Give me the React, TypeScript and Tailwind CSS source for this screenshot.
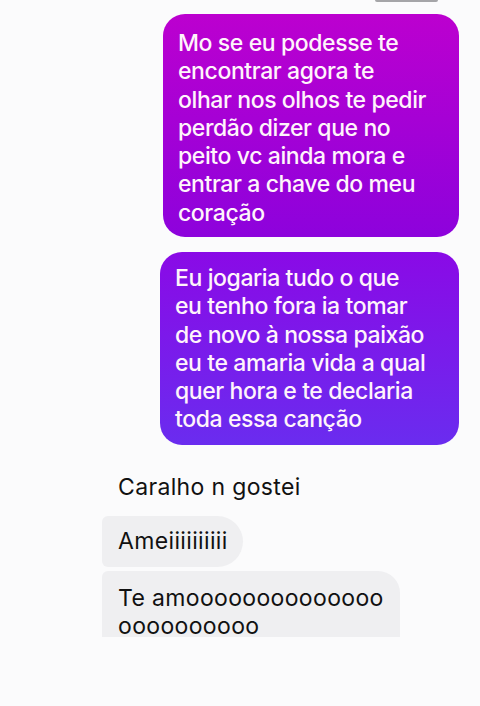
const sent1 = [
  'Mo se eu podesse te',
  'encontrar agora te',
  'olhar nos olhos te pedir',
  'perdão dizer que no',
  'peito vc ainda mora e',
  'entrar a chave do meu',
  'coração',
];

const sent2 = [
  'Eu jogaria tudo o que',
  'eu tenho fora ia tomar',
  'de novo à nossa paixão',
  'eu te amaria vida a qual',
  'quer hora e te declaria',
  'toda essa canção',
];

const Lines = ({ lines }: { lines: string[] }) => (
  <>
    {lines.map((l, i) => (
      <div key={i} className="whitespace-nowrap">{l}</div>
    ))}
  </>
);

export default function App() {
  return (
    <div
      className="w-[480px] h-[706px] overflow-hidden bg-[#fbfbfc] flex flex-col"
      style={{ fontFamily: 'Inter, "Noto Sans", sans-serif' }}
    >
      <div className="flex justify-end pr-[42px]">
        <div className="w-[63px] h-[2px] bg-[#a5a5a8] rounded-b" />
      </div>

      <div className="flex flex-col items-end pr-[21px] pt-[12px] gap-[15px]">
        <div className="w-[296px] h-[223px] rounded-[22px] bg-[linear-gradient(180deg,#bc00cf_0%,#8d02dc_100%)] pl-[15px] pt-[15px] text-[23px] font-medium leading-[28.3px] text-[#fff4fb] tracking-[-0.4px]">
          <Lines lines={sent1} />
        </div>
        <div className="w-[299px] h-[193px] rounded-[22px] bg-[linear-gradient(180deg,#8a0ae6_0%,#6a2cef_100%)] pl-[15px] pt-[12px] text-[23px] font-medium leading-[28.3px] text-[#fff4fb] tracking-[-0.4px]">
          <Lines lines={sent2} />
        </div>
      </div>

      <div className="flex flex-col items-start pl-[102px] pt-[28px] text-[23px] text-[#111] tracking-[0.35px]">
        <div className="pl-[16px] leading-[28px]">Caralho n gostei</div>
        <div className="mt-[15px] h-[51px] flex items-center pl-[16px] pr-[15px] bg-[#efeff1] rounded-l-[6px] rounded-r-[26px]">
          {'Ame' + 'i'.repeat(10)}
        </div>
        <div className="mt-[4px] w-[298px] h-[66px] pl-[16px] pt-[13px] bg-[#efeff1] rounded-tl-[6px] rounded-tr-[22px] leading-[28px]">
          <div className="whitespace-nowrap">{'Te am' + 'o'.repeat(14)}</div>
          <div className="whitespace-nowrap">{'o'.repeat(10)}</div>
        </div>
      </div>
    </div>
  );
}
